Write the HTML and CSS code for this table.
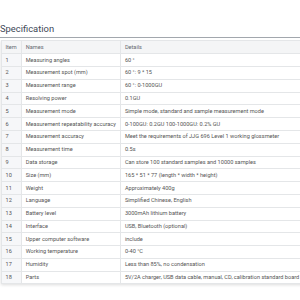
FILE: index.html
```html
<!DOCTYPE html>
<html>
<head>
<meta charset="utf-8">
<link rel="stylesheet" href="styles.css">
</head>
<body>
<div class="page">
  <h2 class="title">Specification</h2>
  <div class="table-wrap">
    <table class="spec">
      <thead>
        <tr><th class="c-item">Item</th><th class="c-name">Names</th><th>Details</th></tr>
      </thead>
      <tbody>
        <tr><td class="c-item">1</td><td>Measuring angles</td><td>60 °</td></tr>
        <tr><td class="c-item">2</td><td>Measurement spot (mm)</td><td>60 °: 9 * 15</td></tr>
        <tr><td class="c-item">3</td><td>Measurement range</td><td>60 °: 0-1000GU</td></tr>
        <tr><td class="c-item">4</td><td>Resolving power</td><td>0.1GU</td></tr>
        <tr><td class="c-item">5</td><td>Measurement mode</td><td>Simple mode, standard and sample measurement mode</td></tr>
        <tr><td class="c-item">6</td><td>Measurement repeatability accuracy</td><td>0-100GU: 0.2GU 100-1000GU: 0.2% GU</td></tr>
        <tr><td class="c-item">7</td><td>Measurement accuracy</td><td>Meet the requirements of JJG 696 Level 1 working glossmeter</td></tr>
        <tr><td class="c-item">8</td><td>Measurement time</td><td>0.5s</td></tr>
        <tr><td class="c-item">9</td><td>Data storage</td><td>Can store 100 standard samples and 10000 samples</td></tr>
        <tr><td class="c-item">10</td><td>Size (mm)</td><td>165 * 51 * 77 (length * width * height)</td></tr>
        <tr><td class="c-item">11</td><td>Weight</td><td>Approximately 400g</td></tr>
        <tr><td class="c-item">12</td><td>Language</td><td>Simplified Chinese, English</td></tr>
        <tr><td class="c-item">13</td><td>Battery level</td><td>3000mAh lithium battery</td></tr>
        <tr><td class="c-item">14</td><td>Interface</td><td>USB, Bluetooth (optional)</td></tr>
        <tr><td class="c-item">15</td><td>Upper computer software</td><td>include</td></tr>
        <tr><td class="c-item">16</td><td>Working temperature</td><td>0-40 °C</td></tr>
        <tr><td class="c-item">17</td><td>Humidity</td><td>Less than 85%, no condensation</td></tr>
        <tr><td class="c-item">18</td><td>Parts</td><td>5V/2A charger, USB data cable, manual, CD, calibration standard board</td></tr>
      </tbody>
    </table>
  </div>
</div>
</body>
</html>
```
FILE: styles.css
```css
html, body {
  margin: 0;
  padding: 0;
  background: #ffffff;
}
body {
  font-family: Roboto, "Liberation Sans", sans-serif;
  overflow: hidden;
}
.page {
  padding-top: 22.8px;
}
.title {
  margin: 0;
  font-size: 9.4px;
  line-height: 11.25px;
  font-weight: 400;
  color: #3d4756;
  padding-bottom: 2.5px;
  border-bottom: 1.4px solid #a2a7ad;
}
.table-wrap {
  margin-top: 2.8px;
  overflow: hidden;
  padding: 0 0 4px 0.5px;
}
.spec {
  width: 330px;
  border-collapse: collapse;
  font-size: 5.6px;
  color: #555555;
  box-shadow: 0 1px 3px rgba(0, 0, 0, 0.14);
}
.spec th,
.spec td {
  height: 12.8px;
  padding: 0 4px;
  box-sizing: border-box;
  border: 1px solid #e4e6e8;
  text-align: left;
  vertical-align: middle;
  white-space: nowrap;
  line-height: 7px;
}
.spec th {
  font-weight: 400;
  color: #666a70;
  background: #f4f5f6;
}
.spec .c-item {
  width: 20.2px;
  background: #f6f7f9;
}
.spec th.c-item {
  background: #f4f5f6;
}
.spec .c-name {
  width: 98.6px;
}
```
